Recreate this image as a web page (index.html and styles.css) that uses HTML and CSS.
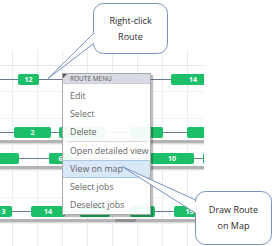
FILE: index.html
```html
<!DOCTYPE html>
<html>
<head>
<meta charset="utf-8">
<link rel="stylesheet" href="styles.css">
</head>
<body>
<div class="page">
  <div class="grid">
    <div class="grid-head"></div>
    <div class="row route">
      <div class="seg" style="margin-left:18px;width:21px">12</div>
      <div class="seg" style="margin-left:132px;width:44px">14</div>
    </div>
    <div class="row"></div>
    <div class="row route bar">
      <div class="seg" style="margin-left:14px;width:37px">2</div>
      <div class="seg" style="margin-left:8px;width:46px"></div>
      <div class="seg" style="margin-left:25px;width:33px"></div>
      <div class="seg" style="margin-left:24px;width:28px"></div>
    </div>
    <div class="row route bar">
      <div class="seg" style="margin-left:-3px;width:22px"></div>
      <div class="seg" style="margin-left:30px;width:23px">6</div>
      <div class="seg" style="margin-left:78px;width:44px">10</div>
      <div class="seg" style="margin-left:9px;width:17px"></div>
    </div>
    <div class="row"></div>
    <div class="row route bar thumb">
      <div class="seg" style="margin-left:-5px;width:17px">3</div>
      <div class="seg" style="margin-left:19px;width:34px">14</div>
      <div class="seg" style="margin-left:15px;width:30px"></div>
      <div class="seg" style="margin-left:20px;width:25px">14</div>
      <div class="seg" style="margin-left:19px;width:31px">15</div>
    </div>
  </div>

  <div class="menu">
    <div class="menu-head">ROUTE MENU</div>
    <div class="menu-list">
      <div class="item">Edit</div>
      <div class="item">Select</div>
      <div class="item">Delete</div>
      <div class="divider"></div>
      <div class="item">Open detailed view</div>
      <div class="item active">View on map</div>
      <div class="item">Select jobs</div>
      <div class="item">Deselect jobs</div>
    </div>
  </div>

  <svg class="callouts" width="272" height="246" viewBox="0 0 272 246">
    <path d="M103.5,3.5 H157.5 A10,10 0 0 1 167.5,13.5 V43.5 A10,10 0 0 1 157.5,53.5 H103.5 A10,10 0 0 1 93.5,43.5 L48,78.5 L93.5,33.5 V13.5 A10,10 0 0 1 103.5,3.5 Z"/>
    <path d="M205.5,191.5 H261.5 A10,10 0 0 1 271.5,201.5 V234.5 A10,10 0 0 1 261.5,244.5 H205.5 A10,10 0 0 1 195.5,234.5 V213 L122,166.5 L195.5,200 V201.5 A10,10 0 0 1 205.5,191.5 Z"/>
  </svg>
  <div class="callout-text c1">Right-click<br>Route</div>
  <div class="callout-text c2">Draw Route<br>on Map</div>
</div>
</body>
</html>
```

FILE: styles.css
```css
html, body {
  margin: 0;
  padding: 0;
  background: #ffffff;
}

.page {
  position: relative;
  width: 272px;
  height: 246px;
  overflow: hidden;
  background: #ffffff;
  font-family: "Open Sans", "Liberation Sans", sans-serif;
}

.grid {
  margin-top: 50px;
  width: 204px;
  height: 196px;
  overflow: hidden;
  background-image: linear-gradient(to right, #ebebeb 1px, transparent 1px);
  background-size: 25px 100%;
  background-position: 12px 0;
}

.grid-head {
  height: 15px;
  border-bottom: 1px solid #e6e6e6;
}

.row {
  position: relative;
  height: 26.33px;
  box-sizing: border-box;
  padding-top: 8px;
  display: flex;
  align-items: flex-start;
  border-bottom: 1px solid #f2f2f2;
}

.row.route::before {
  content: "";
  position: absolute;
  left: 0;
  right: 0;
  top: 13px;
  height: 1px;
  background: #6c7898;
}

.row.bar::after {
  content: "";
  position: absolute;
  left: 0;
  right: 0;
  top: 21px;
  height: 3px;
  background: #b3b3b3;
  border-bottom: 1px solid #dcdcdc;
}

.row.thumb::after {
  background: linear-gradient(to right, #b3b3b3 115px, #8e8e8e 115px, #8e8e8e 136px, #b3b3b3 136px);
}

.seg {
  position: relative;
  z-index: 1;
  flex-shrink: 0;
  height: 11px;
  box-sizing: border-box;
  background: #1bbf68;
  border-radius: 2px;
  color: #ffffff;
  font-size: 7px;
  font-weight: 700;
  line-height: 11px;
  text-align: center;
}

.menu {
  position: absolute;
  left: 62px;
  top: 73px;
  width: 89px;
  box-sizing: border-box;
  background: rgba(255, 255, 255, 0.93);
  border: 1px solid #a9a9a9;
  box-shadow: 2px 2px 1px rgba(0, 0, 0, 0.25);
  z-index: 2;
}

.menu-head {
  position: relative;
  height: 10px;
  line-height: 10px;
  padding-left: 7px;
  font-size: 6.5px;
  color: #5a5a5a;
  background: #d8dbe3;
  border-bottom: 1px solid #c9ccd4;
  box-sizing: border-box;
}

.menu-head::before {
  content: "";
  position: absolute;
  left: 0;
  top: 0;
  border-top: 4px solid #555555;
  border-right: 4px solid transparent;
}

.menu-list {
  padding-top: 3px;
}

.item {
  height: 18px;
  line-height: 18px;
  padding-left: 7px;
  font-size: 8.8px;
  color: #666666;
  white-space: nowrap;
}

.item.active {
  height: 16px;
  line-height: 16px;
  background: #d9e8f6;
  border-top: 1px solid #a8c7e5;
  border-bottom: 1px solid #a8c7e5;
}

.divider {
  height: 1px;
  margin: 0 3px 0 4px;
  background: #dcdcdc;
}

.callouts {
  position: absolute;
  left: 0;
  top: 0;
  z-index: 3;
  pointer-events: none;
}

.callouts path {
  fill: #ffffff;
  stroke: #7891bf;
  stroke-width: 1;
}

.callout-text {
  position: absolute;
  z-index: 4;
  display: flex;
  align-items: center;
  justify-content: center;
  text-align: center;
  font-size: 9px;
  line-height: 16px;
  color: #2b2b2b;
}

.c1 {
  left: 93px;
  top: 3px;
  width: 75px;
  height: 51px;
}

.c2 {
  left: 195px;
  top: 191px;
  width: 77px;
  height: 54px;
}
```
